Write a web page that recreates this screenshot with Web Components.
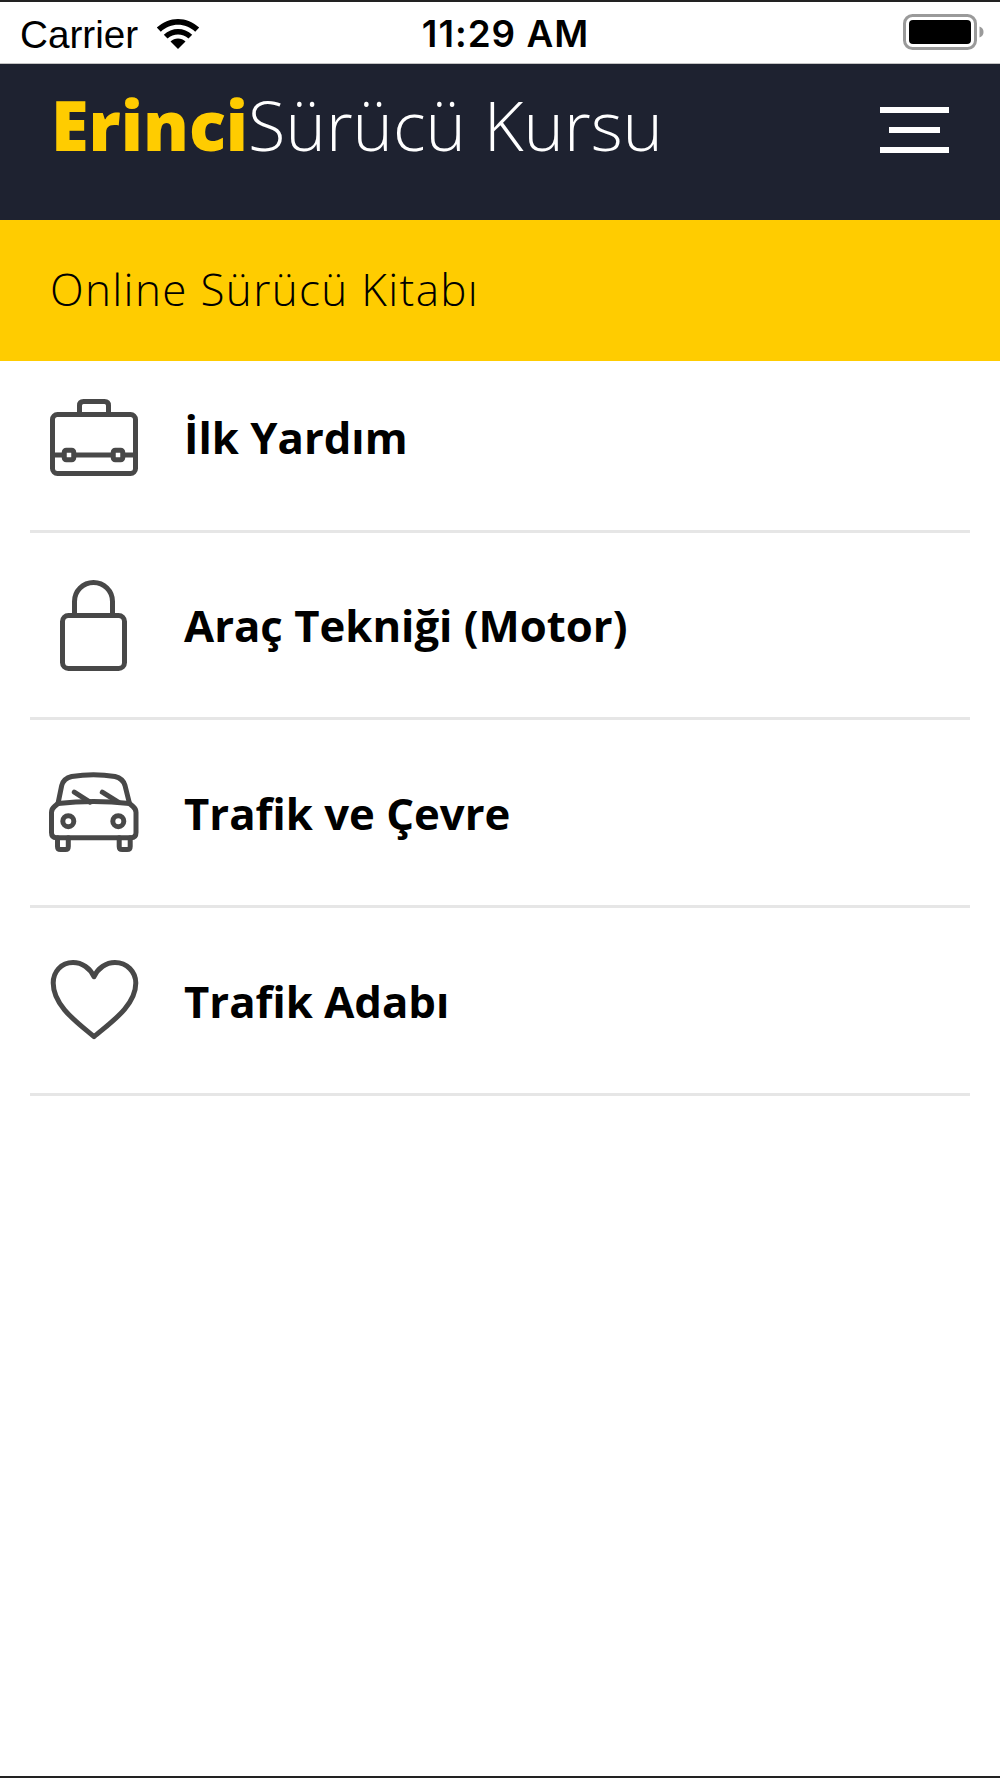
<!DOCTYPE html>
<html lang="tr">
<head>
<meta charset="utf-8">
<title>Erinci Sürücü Kursu</title>
<style>
  html, body { margin: 0; padding: 0; background: #fff; }
  body { font-family: "Open Sans", sans-serif; height: 1778px; box-sizing: border-box; border-top: 2px solid #222; border-bottom: 2px solid #222; }
</style>
</head>
<body>
<status-bar></status-bar>
<app-header></app-header>
<sub-title>Online Sürücü Kitabı</sub-title>
<book-list>
  <book-item icon="case" first>İlk Yardım</book-item>
  <book-item icon="lock">Araç Tekniği (Motor)</book-item>
  <book-item icon="car">Trafik ve Çevre</book-item>
  <book-item icon="heart">Trafik Adabı</book-item>
</book-list>

<script>
class StatusBar extends HTMLElement
{
  constructor()
  {
    super();
    this.attachShadow({mode: "open"});
    this.shadowRoot.innerHTML = `
      <style>
        :host { display: grid; grid-template-columns: 1fr auto 1fr; align-items: center; height: 61px; padding: 0 15px 0 20px; font-family: "Liberation Sans", sans-serif; color: #000; border-bottom: 1px solid #c4c4c4; }
        .left { display: flex; align-items: center; gap: 18px; font-size: 38.7px; }
        .left span { padding-top: 4px; }
        .time { font-family: Inter, sans-serif; font-size: 36.8px; font-weight: 600; letter-spacing: 1px; padding: 2px 0 0 6px; }
        .right { display: flex; justify-content: flex-end; }
      </style>
      <div class="left">
        <span>Carrier</span>
        <svg width="44" height="32" viewBox="0 0 44 32">
          <path d="M22 32 L14.5 24.5 C18.5 20.6 25.5 20.6 29.5 24.5 Z"/>
          <path d="M11.5 21.5 L7.8 17.7 C15.8 10 28.2 10 36.2 17.7 L32.5 21.5 C26.5 16 17.5 16 11.5 21.5 Z"/>
          <path d="M4.8 14.7 L0.8 10.6 C12.6 -1 31.4 -1 43.2 10.6 L39.2 14.7 C29.4 5.4 14.6 5.4 4.8 14.7 Z"/>
        </svg>
      </div>
      <div class="time">11:29 AM</div>
      <div class="right">
        <svg width="82" height="37" viewBox="0 0 82 37">
          <rect x="1.5" y="1.5" width="71" height="33" rx="8" fill="none" stroke="#9a9a9a" stroke-width="3"/>
          <rect x="6" y="6" width="62" height="24" rx="4" fill="#000"/>
          <path d="M76.5 12.5 C79.5 13.5 80.5 15.5 80.5 18 C80.5 20.5 79.5 22.5 76.5 23.5 Z" fill="#9a9a9a"/>
        </svg>
      </div>
    `;
  }
}

class AppHeader extends HTMLElement
{
  constructor()
  {
    super();
    this.attachShadow({mode: "open"});
    this.shadowRoot.innerHTML = `
      <style>
        :host { display: flex; justify-content: space-between; align-items: flex-start; height: 156px; padding: 0 51px 0 51px; background: #1e2230; }
        .brand { font-size: 68.5px; line-height: 90px; margin-top: 16px; color: #fff; font-weight: 300; white-space: nowrap; }
        b { color: #fc0; font-weight: 800; }
        .menu { display: flex; flex-direction: column; align-items: center; gap: 14px; width: 69px; margin-top: 43px; }
        .menu i { display: block; height: 6px; background: #fff; width: 100%; }
        .menu i:nth-child(2) { width: 51px; }
      </style>
      <div class="brand"><b>Erinci</b>Sürücü Kursu</div>
      <div class="menu"><i></i><i></i><i></i></div>
    `;
  }
}

class SubTitle extends HTMLElement
{
  constructor()
  {
    super();
    this.attachShadow({mode: "open"});
    this.shadowRoot.innerHTML = `
      <style>
        :host { display: flex; align-items: center; box-sizing: border-box; height: 141px; padding: 0 0 4px 50px; background: #fc0; color: #000; font-size: 44px; font-weight: 300; letter-spacing: 1.35px; }
      </style>
      <slot></slot>
    `;
  }
}

class BookList extends HTMLElement
{
  constructor()
  {
    super();
    this.attachShadow({mode: "open"});
    this.shadowRoot.innerHTML = `
      <style>
        :host { display: flex; flex-direction: column; padding: 0 30px; }
      </style>
      <slot></slot>
    `;
  }
}

// drawn on a 96x96 box
const ICONS = {
  case: `<rect x="8.500" y="25.500" width="83" height="59" rx="5"/><path d="M35.500 25.500 V16.500 Q35.500 12.500 39.500 12.500 H60.500 Q64.500 12.500 64.500 16.500 V25.500"/><path d="M8.500 66 H91.500"/><rect x="20.250" y="61.250" width="9.500" height="9.500" rx="2" fill="#fff"/><rect x="69.250" y="61.250" width="9.500" height="9.500" rx="2" fill="#fff"/>`,
  lock: `<rect x="18.500" y="38.500" width="62" height="53" rx="6"/><path d="M30.500 38.500 V24.500 A19 19 0 0 1 68.500 24.500 V38.500"/>`,
  car: `<g transform="translate(0 1.500)"><path d="M14 37 L17.700 19 Q19.500 12 27.700 10 Q49.500 6.500 71 10 Q79 12 81 19 L85.500 37"/><path d="M14 37 Q49.500 33 85.500 37 L89 40 Q92 42.500 92 46 V66 Q92 71.300 87 71.300 H12.500 Q7.500 71.300 7.500 66 V46 Q7.500 42.500 10.500 40 Z"/><circle cx="24.300" cy="54.700" r="5.500"/><circle cx="74.300" cy="54.700" r="5.500"/><path d="M13.500 71.300 V80 Q13.500 83 16.500 83 H21.500 Q24.300 83 24.300 80 V71.300"/><path d="M75.200 71.300 V80 Q75.200 83 78.200 83 H83.200 Q86.200 83 86.200 80 V71.300"/><path d="M30.300 25.700 L46 35.700"/><path d="M58.300 25.700 L74.300 35.700"/></g>`,
  heart: `<g transform="translate(0 1)"><path d="M50 22.700 C46 14 38 8.500 29 8.500 C17 8.500 9.200 18 9.200 29 C9.200 52 34 69 50 82.700 C66 69 91.800 52 91.800 29 C91.800 18 83 8.500 71 8.500 C62 8.500 54 14 50 22.700 Z"/></g>`
};

class BookItem extends HTMLElement
{
  constructor()
  {
    super();
    this.attachShadow({mode: "open"});
    const icon = this.getAttribute("icon");
    this.shadowRoot.innerHTML = `
      <style>
        :host { display: flex; align-items: center; gap: 44px; padding: 45px 0 44px 14px; border-bottom: 3px solid #e6e6e6; color: #000; font-size: 43.7px; font-weight: 700; line-height: 96px; }
        :host([first]) { padding-top: 28px; padding-bottom: 45px; margin-bottom: -1px; }
        svg { flex: none; overflow: visible; fill: none; stroke: #484848; stroke-width: 5; stroke-linecap: round; stroke-linejoin: round; }
      </style>
      <svg width="96" height="96" viewBox="0 0 96 96">${ICONS[icon]}</svg>
      <span><slot></slot></span>
    `;
  }
}

customElements.define("status-bar", StatusBar);
customElements.define("app-header", AppHeader);
customElements.define("sub-title", SubTitle);
customElements.define("book-list", BookList);
customElements.define("book-item", BookItem);
</script>
</body>
</html>
